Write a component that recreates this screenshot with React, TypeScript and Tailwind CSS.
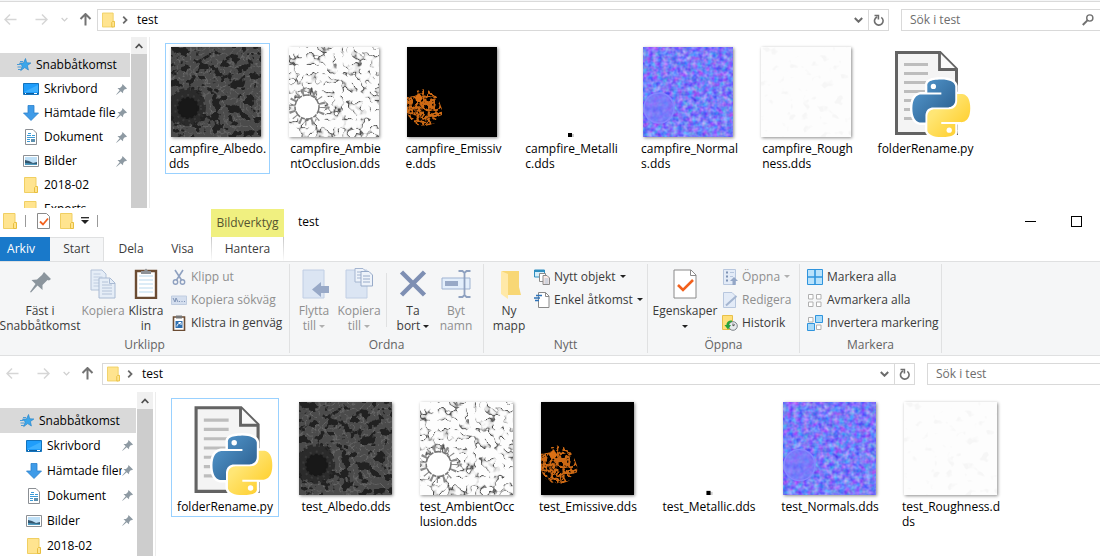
import type { ReactNode } from "react"
import { clsx } from "clsx"

type Kind = "albedo" | "occlusion" | "emissive" | "metallic" | "normals" | "roughness" | "python"

type FileEntry = { kind: Kind; lines: string[]; selected?: boolean }

const topFiles: FileEntry[] = [
  { kind: "albedo", lines: ["campfire_Albedo.", "dds"], selected: true },
  { kind: "occlusion", lines: ["campfire_Ambie", "ntOcclusion.dds"] },
  { kind: "emissive", lines: ["campfire_Emissiv", "e.dds"] },
  { kind: "metallic", lines: ["campfire_Metalli", "c.dds"] },
  { kind: "normals", lines: ["campfire_Normal", "s.dds"] },
  { kind: "roughness", lines: ["campfire_Rough", "ness.dds"] },
  { kind: "python", lines: ["folderRename.py"] },
]

const bottomFiles: FileEntry[] = [
  { kind: "python", lines: ["folderRename.py"], selected: true },
  { kind: "albedo", lines: ["test_Albedo.dds"] },
  { kind: "occlusion", lines: ["test_AmbientOcc", "lusion.dds"] },
  { kind: "emissive", lines: ["test_Emissive.dds"] },
  { kind: "metallic", lines: ["test_Metallic.dds"] },
  { kind: "normals", lines: ["test_Normals.dds"] },
  { kind: "roughness", lines: ["test_Roughness.d", "ds"] },
]

// Noise filters shared by all thumbnails
function TextureFilters() {
  return (
    <svg className="absolute size-0" aria-hidden="true">
      <defs>
        <filter id="dark-blobs" x="0" y="0" width="1" height="1" colorInterpolationFilters="sRGB">
          <feTurbulence type="fractalNoise" baseFrequency="0.12" numOctaves="3" seed="8" />
          <feColorMatrix values="0 0 0 0 0.13  0 0 0 0 0.13  0 0 0 0 0.13  16 0 0 0 -8.6" />
        </filter>
        <filter id="stone-grain" x="0" y="0" width="1" height="1" colorInterpolationFilters="sRGB">
          <feTurbulence type="turbulence" baseFrequency="0.15" numOctaves="2" seed="3" />
          <feColorMatrix values="0 0 0 0 0.42  0 0 0 0 0.42  0 0 0 0 0.42  -5 0 0 0 0.9" />
        </filter>
        <filter id="crease-lines" x="0" y="0" width="1" height="1" colorInterpolationFilters="sRGB">
          <feTurbulence type="fractalNoise" baseFrequency="0.11" numOctaves="2" seed="5" result="noise" />
          <feColorMatrix in="noise" values="0 0 0 0 0.2  0 0 0 0 0.2  0 0 0 0 0.2  1 0 0 0 0" />
          <feComponentTransfer result="lines">
            <feFuncA type="table" tableValues="0 0 0 0 0 0 0 0 0.1 0.2 0.9 0 0 0 0 0 0 0 0 0 0" />
          </feComponentTransfer>
          <feColorMatrix in="noise" values="0 0 0 0 0  0 0 0 0 0  0 0 0 0 0  0 7 0 0 -2.9" result="mask" />
          <feComposite in="lines" in2="mask" operator="in" />
        </filter>
        <filter id="embers" x="0" y="0" width="1" height="1" colorInterpolationFilters="sRGB">
          <feTurbulence type="turbulence" baseFrequency="0.18" numOctaves="3" seed="4" />
          <feColorMatrix values="0 0 0 0 0.8  0 0 0 0 0.41  0 0 0 0 0.08  -6 0 0 0 2.3" result="glow" />
          <feComposite in="glow" in2="SourceGraphic" operator="in" />
        </filter>
        <filter id="bumps" x="0" y="0" width="1" height="1" colorInterpolationFilters="sRGB">
          <feTurbulence type="fractalNoise" baseFrequency="0.2" numOctaves="2" seed="6" />
          <feColorMatrix values="0.75 0 0 0 0.1  0 0.7 0 0 0.14  0 0 0.2 0 0.87  0 0 0 0 1" />
        </filter>
        <filter id="faint-blobs" x="0" y="0" width="1" height="1" colorInterpolationFilters="sRGB">
          <feTurbulence type="fractalNoise" baseFrequency="0.12" numOctaves="2" seed="8" />
          <feColorMatrix values="0 0 0 0 0.965  0 0 0 0 0.965  0 0 0 0 0.965  8 0 0 0 -4.9" />
        </filter>
      </defs>
    </svg>
  )
}

const snakePath =
  "M14.25.18l.9.2.73.26.59.3.45.32.34.34.25.34.16.33.1.3.04.26.02.2-.01.13V8.5l-.05.63-.13.55-.21.46-.26.38-.3.31-.33.25-.35.19-.35.14-.33.1-.3.07-.26.04-.21.02H8.77l-.69.05-.59.14-.5.22-.41.27-.33.32-.27.35-.2.36-.15.37-.1.35-.07.32-.04.27-.02.21v3.06H3.17l-.21-.03-.28-.07-.32-.12-.35-.18-.36-.26-.36-.36-.35-.46-.32-.59-.28-.73-.21-.88-.14-1.05-.05-1.23.06-1.22.16-1.04.24-.87.32-.71.36-.57.4-.44.42-.33.42-.24.4-.16.36-.1.32-.05.24-.01h.16l.06.01h8.16v-.83H6.18l-.01-2.75-.02-.37.05-.34.11-.31.17-.28.25-.26.31-.23.38-.2.44-.18.51-.15.58-.12.64-.1.71-.06.77-.04.84-.02 1.27.05z"

function PythonFile({ className }: { className: string }) {
  return (
    <svg viewBox="0 0 90 90" className={clsx("overflow-visible", className)} aria-hidden="true">
      <defs>
        <linearGradient id="snake-blue" x1="0" y1="0" x2="1" y2="1">
          <stop offset="0.2" stopColor="#4d8fc4" />
          <stop offset="0.9" stopColor="#2b5f8f" />
        </linearGradient>
        <linearGradient id="snake-yellow" x1="1" y1="1" x2="0" y2="0">
          <stop offset="0.3" stopColor="#ffe675" />
          <stop offset="0.8" stopColor="#ffd134" />
        </linearGradient>
      </defs>
      <path d="M17.5 5.5H61L77.5 22V86.5H17.5z" fill="#f4f4f4" stroke="#636363" strokeWidth="3" />
      <path d="M60.5 5.5V22.5H77.5" fill="#f9f9f9" stroke="#636363" strokeWidth="2.8" />
      <path d="M25 17.5H49M25 26.5H49M25 35.5H49M25 44.5H49M25 53.5H49M25 62.5H49M25 71.5H49" stroke="#bdbdbd" strokeWidth="3" />
      <g transform="translate(33.5 32.5) scale(2.4)">
        <g stroke="#fff" strokeWidth="2" strokeLinejoin="round" fill="#fff">
          <path d={snakePath} />
          <path d={snakePath} transform="rotate(180 12 12)" />
        </g>
        <path d={snakePath} fill="url(#snake-blue)" />
        <path d={snakePath} transform="rotate(180 12 12)" fill="url(#snake-yellow)" />
        <circle cx="8.7" cy="2.9" r="1.1" fill="#fff" />
        <circle cx="15.3" cy="21.1" r="1.1" fill="#fff" />
      </g>
    </svg>
  )
}

function Thumb({ kind, className }: { kind: Kind; className: string }) {
  if (kind === "python") return <PythonFile className={className} />
  return (
    <svg
      viewBox="0 0 90 90"
      className={clsx(className, kind !== "metallic" && "shadow-[1px_1px_3px_rgba(0,0,0,0.45)]")}
      aria-hidden="true"
    >
      {kind === "albedo" && (
        <>
          <rect width="90" height="90" fill="#4b4b4b" />
          <rect width="90" height="90" filter="url(#stone-grain)" />
          <rect width="90" height="90" filter="url(#dark-blobs)" />
          <circle cx="16" cy="60" r="17" fill="#2b2b2b" stroke="#2b2b2b" strokeWidth="4" strokeDasharray="5 3 2 2" />
          <circle cx="17" cy="61" r="13" fill="none" stroke="#3a3a3a" strokeWidth="2" strokeDasharray="2 4" />
          <circle cx="17" cy="61" r="10" fill="#181818" stroke="#181818" strokeWidth="2" strokeDasharray="3 2" />
        </>
      )}
      {kind === "occlusion" && (
        <>
          <rect width="90" height="90" fill="#fdfdfd" />
          <rect width="90" height="90" filter="url(#crease-lines)" />
          <circle cx="18" cy="60" r="15" fill="none" stroke="#8a8a8a" strokeWidth="7" strokeDasharray="1 4 2 5" />
          <circle cx="18" cy="60" r="12" fill="#fff" stroke="#777" strokeWidth="1.5" strokeDasharray="7 1 4 1" />
        </>
      )}
      {kind === "emissive" && (
        <>
          <rect width="90" height="90" fill="#000" />
          <path
            d="M0 50L7 49 9 44 16 42 23 44 29 49 32 54 35 62 35 68 30 70 28 76 20 79 10 78 4 74 0 66z"
            fill="#000"
            filter="url(#embers)"
          />
          <path d="M8 50l4-4 4 5-3 4-4-1z" fill="#dc7115" />
        </>
      )}
      {kind === "metallic" && (
        <>
          <rect x="44" y="87" width="5" height="4" fill="#ccc" />
          <rect x="43" y="86" width="4" height="4" fill="#000" />
        </>
      )}
      {kind === "normals" && (
        <>
          <rect width="90" height="90" fill="#8080ff" />
          <rect width="90" height="90" filter="url(#bumps)" />
          <circle cx="16" cy="61" r="15" fill="#7a78fb" fillOpacity="0.65" stroke="#8486ff" strokeWidth="1.5" />
        </>
      )}
      {kind === "roughness" && (
        <>
          <rect width="90" height="90" fill="#fdfdfd" />
          <rect width="90" height="90" filter="url(#faint-blobs)" />
        </>
      )}
    </svg>
  )
}

function FileTile({ file, tile, thumb }: { file: FileEntry; tile: string; thumb: string }) {
  return (
    <button
      type="button"
      className={clsx(
        "flex shrink-0 flex-col items-start self-start border pt-[3px] pb-[2px]",
        tile,
        file.selected ? "border-[#99d1ff]" : "border-transparent",
      )}
    >
      <Thumb kind={file.kind} className={thumb} />
      <span className="mt-1 self-center text-left text-[12px] leading-[15px] whitespace-nowrap">
        {file.lines.map((line) => (
          <span key={line} className="block">
            {line}
          </span>
        ))}
      </span>
    </button>
  )
}

function Folder({ className = "h-4 w-[14px]" }: { className?: string }) {
  return (
    <svg viewBox="0 0 14 16" className={clsx("shrink-0", className)} aria-hidden="true">
      <path d="M.5.5H12V15.5H.5z" fill="#ffe48f" stroke="#f0cf62" />
      <path d="M11.5 9.5h2v6h-3v-5z" fill="#ffe48f" stroke="#e8bf3f" />
    </svg>
  )
}

function Pin() {
  return (
    <svg viewBox="0 0 11 11" className="size-[11px] shrink-0" aria-hidden="true">
      <path d="M6.5 0L11 4.5 9.8 5.2 9 4.9 7.2 6.9 7 9.3 4.7 7.2.6 10.8.2 10.4 3.7 6.2 1.5 4.1 4 3.9 6 2z" fill="#8e9aa3" />
    </svg>
  )
}

function StarIcon() {
  return (
    <svg viewBox="0 0 14 14" className="size-[14px] shrink-0" aria-hidden="true">
      <path d="M8.5.5l1.2 4.3 4.2.2-3.5 2.5 1 4.5-3.7-2.4-4 3 1.5-4.700L2.5 5h4z" fill="#3ba6ea" stroke="#2b87cc" strokeWidth=".7" />
      <path d="M0 6.5h3.5M.5 9h3.5M1 11.5h3M3 3.5h3" stroke="#4a9ad6" />
    </svg>
  )
}

const placeIcons: Record<string, ReactNode> = {
  Skrivbord: (
    <>
      <path d="M.5 2.5h15v11H.5z" fill="#1f9dfb" stroke="#1373bd" />
      <path d="M1 11L15 4V11z" fill="#3db0ff" />
      <path d="M1 12.5h14" stroke="#0e5e9e" />
      <path d="M2 12.5h1M11 12.5h3" stroke="#fff" />
    </>
  ),
  "Hämtade filer": <path d="M5 .5h6V8h4.500L8 15.500.500 8H5z" fill="#3f9be8" stroke="#2b80cc" strokeWidth=".8" />,
  Dokument: (
    <>
      <path d="M2.5.5H10L13.5 4V15.5H2.5z" fill="#fff" stroke="#8b8f94" />
      <path d="M5 4.5h3M4 6.5h4M4 8.5h8M4 10.5h3M4 12.5h3M9 6.5h3" stroke="#3c9ad6" />
      <path d="M8 10h4v3H8z" fill="#5c8fae" />
    </>
  ),
  Bilder: (
    <>
      <path d="M.5 2.5h15v11H.5z" fill="#fff" stroke="#8b8f94" />
      <path d="M2 4h12v8H2z" fill="#bfe0f7" />
      <path d="M2 7l4 1 4 2 4-1v3H2z" fill="#34566e" />
      <path d="M2 10l5 .5 7 .5v1H2z" fill="#4e9bc0" />
    </>
  ),
}

const places = ["Skrivbord", "Hämtade filer", "Dokument", "Bilder", "2018-02", "Exports"]

function Sidebar({ width, row, rootPad, childPad }: { width: string; row: string; rootPad: string; childPad: string }) {
  return (
    <>
      <nav className={clsx("shrink-0 pt-4 text-[12px] leading-4", width)}>
        <a href="#snabbatkomst" className={clsx("flex items-center gap-[5px] bg-[#d9d9d9]", row, rootPad)}>
          <StarIcon />
          Snabbåtkomst
        </a>
        {places.map((place) => (
          <a
            key={place}
            href="#plats"
            className={clsx("flex items-center pr-[3px] whitespace-nowrap", row, childPad)}
          >
            {placeIcons[place] ? (
              <svg viewBox="0 0 16 16" className="size-4 shrink-0" aria-hidden="true">
                {placeIcons[place]}
              </svg>
            ) : (
              <span className="flex w-4 shrink-0 justify-center">
                <Folder />
              </span>
            )}
            <span className="ml-[5px] min-w-0 flex-1 overflow-hidden">{place}</span>
            {placeIcons[place] && <Pin />}
          </a>
        ))}
      </nav>
      <div className="mr-[2px] ml-px w-4 shrink-0 bg-[#cdcdcd]">
        <button type="button" aria-label="Rulla upp" className="flex h-[17px] w-full items-center justify-center bg-[#f0f0f0]">
          <svg viewBox="0 0 8 6" className="h-[6px] w-2" aria-hidden="true">
            <path d="M.7 5L4 1.5 7.3 5" fill="none" stroke="#505050" strokeWidth="1.8" />
          </svg>
        </button>
      </div>
    </>
  )
}

function NavArrow({ label, up, flip, faded = true }: { label: string; up?: boolean; flip?: boolean; faded?: boolean }) {
  return (
    <button type="button" aria-label={label} className={clsx("shrink-0", faded ? "text-[#d6d6d6]" : "text-[#737373]")}>
      <svg viewBox="0 0 13 13" className={clsx("size-[13px]", flip && "rotate-180", up && "rotate-90")} aria-hidden="true">
        <path d="M12.5 6.5H1.5M6 1.5L1 6.5 6 11.5" fill="none" stroke="currentColor" strokeWidth={up ? 2 : 1.5} />
      </svg>
    </button>
  )
}

function Chevron({ className, width = 1.6 }: { className: string; width?: number }) {
  return (
    <svg viewBox="0 0 9 6" className={className} aria-hidden="true">
      <path d="M.8 1L4.5 4.7 8.2 1" fill="none" stroke="currentColor" strokeWidth={width} />
    </svg>
  )
}

function AddressBar({ nav, search, magnifier }: { nav: string; search: string; magnifier?: boolean }) {
  return (
    <div className="flex h-[36px] shrink-0 items-center pb-px text-[12px]">
      <div className={clsx("flex shrink-0 items-center", nav)}>
        <NavArrow label="Bakåt" />
        <span className="w-[18px]" />
        <NavArrow label="Framåt" flip />
        <button type="button" aria-label="Senaste platser" className="ml-[13px] text-[#cfcfcf]">
          <Chevron className="h-[5px] w-[7px]" />
        </button>
        <span className="w-[11px]" />
        <NavArrow label="Upp" up faded={false} />
      </div>
      <div className="flex h-[22px] min-w-0 flex-1 items-center border border-[#d9d9d9]">
        <Folder className="ml-1 h-4 w-[13px]" />
        <Chevron className="ml-[6px] h-[6px] w-[8px] -rotate-90 text-[#6b6b6b]" width={2} />
        <button type="button" className="ml-2 flex-1 text-left">
          test
        </button>
        <button type="button" aria-label="Tidigare sökvägar" className="mr-[5px] text-[#6b6b6b]">
          <Chevron className="h-[6px] w-[9px]" width={2} />
        </button>
        <button type="button" aria-label="Uppdatera" className="flex h-full w-5 items-center justify-center border-l border-[#d9d9d9]">
          <svg viewBox="0 0 11 12" className="h-3 w-[11px]" aria-hidden="true">
            <path d="M4 2.9A4.3 4.3 0 1 0 8.3 3.3M1.5 1.5H5.4V5.5" fill="none" stroke="#6e6e6e" strokeWidth="1.6" />
          </svg>
        </button>
      </div>
      <label className={clsx("ml-3 flex h-[22px] shrink-0 items-center border border-r-0 border-[#d9d9d9] pr-[6px]", search)}>
        <input
          type="search"
          aria-label="Sök i test"
          placeholder="Sök i test"
          className="min-w-0 flex-1 bg-transparent pl-2 outline-none placeholder:text-[#6d6d6d]"
        />
        {magnifier && (
          <svg viewBox="0 0 12 12" className="size-3" aria-hidden="true">
            <circle cx="7.8" cy="4" r="3.1" fill="none" stroke="#707070" strokeWidth="1.4" />
            <path d="M5.4 6.4L.8 11" stroke="#707070" strokeWidth="2" />
          </svg>
        )}
      </label>
    </div>
  )
}

function Caret({ faded }: { faded?: boolean }) {
  return (
    <svg viewBox="0 0 6 3" className="inline-block h-[3px] w-[6px] align-middle" aria-hidden="true">
      <path d="M0 0h6L3 3z" fill={faded ? "#b0b0b0" : "#222"} />
    </svg>
  )
}

function BigButton({ width, icon, lines, disabled, caret }: { width: string; icon: ReactNode; lines: string[]; disabled?: boolean; caret?: boolean }) {
  return (
    <button
      type="button"
      disabled={disabled}
      className={clsx("flex shrink-0 flex-col items-center pt-[2px]", width, disabled ? "text-[#8f8f8f]" : "text-[#3b3b3b]")}
    >
      <svg viewBox="0 0 32 32" className="size-8" aria-hidden="true">
        {icon}
      </svg>
      <span className="mt-1 text-center leading-[15px] whitespace-nowrap">
        {lines.map((line, i) => (
          <span key={i} className="block">
            {line}
            {caret && i === lines.length - 1 && (
              <>
                {line && " "}
                <Caret faded={disabled} />
              </>
            )}
          </span>
        ))}
      </span>
    </button>
  )
}

function SmallButton({ icon, label, disabled, caret }: { icon: ReactNode; label: string; disabled?: boolean; caret?: boolean }) {
  return (
    <button
      type="button"
      disabled={disabled}
      className={clsx("flex h-[23px] items-center gap-1 whitespace-nowrap", disabled ? "text-[#8f8f8f]" : "text-[#3b3b3b]")}
    >
      <svg viewBox="0 0 16 16" className="size-4 shrink-0" aria-hidden="true">
        {icon}
      </svg>
      {label}
      {caret && <Caret faded={disabled} />}
    </button>
  )
}

function Group({ title, width, children }: { title: string; width: string; children: ReactNode }) {
  return (
    <section className={clsx("my-[2px] flex shrink-0 flex-col border-r border-[#e0e1e2]", width)}>
      <div className="flex flex-1 pt-px">{children}</div>
      <h2 className="pt-[2px] text-center leading-4 text-[#636363]">{title}</h2>
    </section>
  )
}

const pinIcon = <path d="M20 5L27 12 25 13.5 23.5 13 18.5 18 18.5 23 13.5 18.5 7 25.5 6 25 11.5 17 7.5 13 13 12.5 18 8z" fill="#8b959d" />

const copyIcon = (
  <>
    <path d="M4 3h11l4 4v16H4z" fill="#e5edf7" stroke="#b3c2d8" />
    <path d="M6.5 7h7M6.5 10h9M6.5 13h6M6.5 16h6M6.5 19h6" stroke="#c0cde0" />
    <path d="M12 11h11l5 5v15H12z" fill="#e5edf7" stroke="#a9bad3" />
    <path d="M22.5 11.5V16.5H28" fill="none" stroke="#a9bad3" />
    <path d="M15 15h6M15 18h10M15 21h10M15 24h10M15 27h10" stroke="#b3c2d8" />
  </>
)

const pasteIcon = (
  <>
    <path d="M6 4h20v27H6z" fill="#fff" stroke="#6b4c33" strokeWidth="2.4" />
    <path d="M9 9h14M9 13h14M9 17h14M9 21h14M9 25h14" stroke="#b9d9ee" />
    <path d="M11 7V4h3l2-2.5L18 4h3v3z" fill="#8d9196" />
  </>
)

const moveIcon = (
  <>
    <path d="M5 3h21v28H5z" fill="#dbe5f3" stroke="#c0cee4" />
    <path d="M23 19h8v7h-8v4L14 22.5 23 15z" fill="#98a9c7" />
  </>
)

const copyToIcon = (
  <>
    <path d="M3 3h21v28H3z" fill="#dbe5f3" stroke="#c0cee4" />
    <path d="M12 1.5h8l3 3V15H12z" fill="#eef3fa" stroke="#a4b5d0" />
    <path d="M14 5h6M14 8h6M14 11h6" stroke="#a4b5d0" />
    <path d="M18 4.5h8l3.5 3.5V19H18z" fill="#eef3fa" stroke="#98abc9" />
    <path d="M20 9h7M20 12h7M20 15h7" stroke="#98abc9" />
  </>
)

const renameIcon = (
  <>
    <path d="M2 11h28v11H2z" fill="#e3eefb" stroke="#9fb3d2" />
    <path d="M5 14h13v5H5z" fill="#98a9c7" />
    <path d="M18.5 4h4l2 2 2-2h4M18.5 30h4l2-2 2 2h4M24.5 6v22" fill="none" stroke="#8fa1c0" strokeWidth="1.8" />
  </>
)

const newFolderIcon = (
  <>
    <path d="M9 4h17v16l2 8H14z" fill="#f8d775" />
    <path d="M8 4l7 3v25L8 27z" fill="#ffe9a8" />
  </>
)

const propertiesIcon = (
  <>
    <path d="M5 3h17l5 5v23H5z" fill="#fff" stroke="#8a8a8a" />
    <path d="M21.5 3V8.5H27" fill="none" stroke="#8a8a8a" />
    <path d="M9 18l5 5L24 13" fill="none" stroke="#f2601c" strokeWidth="2.6" />
  </>
)

const smallSquares = (
  <path d="M1.5 2.5h4.5v4.5h-4.5zM9.5 2.5h4.5v4.5h-4.5zM1.5 10h4.5v4.5h-4.5zM9.5 10h4.5v4.5h-4.5z" fill="#fff" stroke="#b0b0b0" />
)

function Ribbon() {
  return (
    <div className="flex h-[95px] shrink-0 border-y border-[#dfe0e1] bg-[#f5f6f7] text-[12px]">
      <Group title="Urklipp" width="w-[290px]">
        <BigButton width="w-[80px]" icon={pinIcon} lines={["Fäst i", "Snabbåtkomst"]} />
        <BigButton width="w-[46px]" icon={copyIcon} lines={["Kopiera"]} disabled />
        <BigButton width="w-[40px]" icon={pasteIcon} lines={["Klistra", "in"]} />
        <div className="ml-[5px]">
          <SmallButton
            label="Klipp ut"
            disabled
            icon={
              <>
                <path d="M4 1l6.5 10M12 1L5.5 11" stroke="#8fa1c0" strokeWidth="1.6" />
                <circle cx="4.5" cy="13" r="2.2" fill="none" stroke="#8fa1c0" strokeWidth="1.4" />
                <circle cx="11.5" cy="13" r="2.2" fill="none" stroke="#8fa1c0" strokeWidth="1.4" />
              </>
            }
          />
          <SmallButton
            label="Kopiera sökväg"
            disabled
            icon={
              <>
                <path d="M.5 4h15v8.5H.5z" fill="#d4deee" stroke="#c0cde0" />
                <path d="M2 6l2 4 1-4 2 4M8 9.5h1M10.5 9.5h1M13 9.5h1" fill="none" stroke="#7f93b5" />
              </>
            }
          />
          <SmallButton
            label="Klistra in genväg"
            icon={
              <>
                <path d="M2.5 2h11v13.5h-11z" fill="#fff" stroke="#6b4c33" strokeWidth="1.6" />
                <path d="M5 .5h6v3H5z" fill="#777" />
                <path d="M4.5 6h7v7h-7z" fill="#2f6fb0" />
                <path d="M6 11.5c0-2 1-3 3-3M7.5 7.5H10V10" fill="none" stroke="#fff" />
              </>
            }
          />
        </div>
      </Group>
      <Group title="Ordna" width="w-[194px]">
        <BigButton width="w-[48px]" icon={moveIcon} lines={["Flytta", "till"]} disabled caret />
        <BigButton width="w-[42px]" icon={copyToIcon} lines={["Kopiera", "till"]} disabled caret />
        <div className="mx-[6px] my-2 w-px bg-[#e0e1e2]" />
        <BigButton width="w-[40px]" icon={<path d="M4.5 5L27.5 28M27.5 5L4.5 28" stroke="#7e8fb3" strokeWidth="4.5" />} lines={["Ta", "bort"]} caret />
        <BigButton width="w-[46px]" icon={renameIcon} lines={["Byt", "namn"]} disabled />
      </Group>
      <Group title="Nytt" width="w-[164px]">
        <BigButton width="w-[50px]" icon={newFolderIcon} lines={["Ny", "mapp"]} />
        <div>
          <SmallButton
            label="Nytt objekt"
            caret
            icon={
              <>
                <path d="M.5 1h10v7H.5z" fill="#d5eefa" stroke="#2f8fc0" />
                <path d="M1 2h9" stroke="#2f8fc0" strokeWidth="2" />
                <path d="M5.5 4.5h6v8h-6z" fill="#fff" stroke="#8a8a8a" />
                <path d="M9 6.5h4l2.5 2.5v6.5H9z" fill="#fbe9e4" stroke="#8a8a8a" />
                <path d="M10.5 10h4M10.5 12h4M10.5 14h4" stroke="#a9c0d6" />
              </>
            }
          />
          <SmallButton
            label="Enkel åtkomst"
            caret
            icon={
              <>
                <path d="M4.5.5h7l3.5 3.5v11.5H4.5z" fill="#fff" stroke="#8a8a8a" />
                <path d="M11.5.5V4.5H15" fill="none" stroke="#8a8a8a" />
                <path d="M2 3.5h6M0 6h6M1 8.5h4" stroke="#2f73b8" strokeWidth="1.4" />
              </>
            }
          />
        </div>
      </Group>
      <Group title="Öppna" width="w-[152px]">
        <BigButton width="w-[74px]" icon={propertiesIcon} lines={["Egenskaper", ""]} caret />
        <div>
          <SmallButton
            label="Öppna"
            disabled
            caret
            icon={
              <>
                <path d="M1.5.5h12v15h-12z" fill="#e3ebf7" stroke="#b8c7de" />
                <path d="M4 3.5h2M4 7.5h2M4 11.5h2" stroke="#7f93b5" strokeWidth="2" />
                <path d="M8 3.5h4M8 7.5h3" stroke="#b8c7de" />
                <path d="M12 8l4 4h-2.5v4h-3v-4H8z" fill="#93a6c6" />
              </>
            }
          />
          <SmallButton
            label="Redigera"
            disabled
            icon={
              <>
                <path d="M1.5.5H10l3.5 3.5v11.5h-12z" fill="#e3ebf7" stroke="#b8c7de" />
                <path d="M4 13.5L14.5 4" stroke="#a4b5d0" strokeWidth="2" />
              </>
            }
          />
          <SmallButton
            label="Historik"
            icon={
              <>
                <path d="M.5.5h10v14H.5z" fill="#ffe07a" stroke="#e8c04a" />
                <circle cx="11" cy="11" r="4.3" fill="#e6eaed" stroke="#7b8288" />
                <path d="M11 8.5V11l2-1.5" fill="none" stroke="#555" />
                <path d="M10 5.5C6 5.5 4.5 7.5 4.5 10H2.5l3.5 4.5L9 10H7c0-2 1-3 3-3z" fill="#27a33b" />
              </>
            }
          />
        </div>
      </Group>
      <Group title="Markera" width="w-[142px]">
        <div className="pl-[7px]">
          <SmallButton
            label="Markera alla"
            icon={
              <>
                <path d="M.5.5h15v15H.5z" fill="#b9e2fb" stroke="#2f94dd" />
                <path d="M8 0v16M0 8h16" stroke="#2f94dd" strokeWidth="1.6" />
              </>
            }
          />
          <SmallButton label="Avmarkera alla" icon={smallSquares} />
          <SmallButton
            label="Invertera markering"
            icon={
              <>
                {smallSquares}
                <path d="M8.5.5h7v7h-7zM.5 8.5h7v7h-7z" fill="#a9dbfa" stroke="#2f94dd" />
              </>
            }
          />
        </div>
      </Group>
    </div>
  )
}

function TitleBar() {
  return (
    <header className="shrink-0 text-[12px]">
      <div className="flex h-[29px] pt-px">
        <div className="flex w-[211px] shrink-0 items-center pb-[5px] pl-[3px]">
          <Folder />
          <span className="mr-[11px] ml-2 h-3 w-px bg-[#9a9a9a]" />
          <button type="button" aria-label="Egenskaper">
            <svg viewBox="0 0 13 16" className="h-4 w-[13px]" aria-hidden="true">
              <path d="M.5.5H9.5L12.5 3.5V15.5H.5z" fill="#fff" stroke="#8a8a8a" />
              <path d="M3 8.5l3 3 5-6" fill="none" stroke="#f2601c" strokeWidth="1.8" />
            </svg>
          </button>
          <button type="button" aria-label="Ny mapp" className="ml-[10px]">
            <Folder />
          </button>
          <button type="button" aria-label="Anpassa verktygsfältet" className="ml-[7px]">
            <svg viewBox="0 0 8 7" className="h-[7px] w-2" aria-hidden="true">
              <path d="M0 .7h8" stroke="#222" strokeWidth="1.3" />
              <path d="M0 3h8L4 7z" fill="#222" />
            </svg>
          </button>
          <span className="ml-2 h-3 w-px bg-[#9a9a9a]" />
        </div>
        <div className="flex w-[73px] shrink-0 items-center justify-center bg-[#f0f080] text-[#555530]">Bildverktyg</div>
        <h1 className="ml-[14px] flex-1 leading-[25px] text-black">test</h1>
        <button type="button" aria-label="Minimera" className="flex h-6 w-[46px] items-center justify-center">
          <span className="h-px w-[11px] bg-black" />
        </button>
        <button type="button" aria-label="Maximera" className="mr-px flex h-6 w-[46px] items-center justify-center">
          <span className="size-[11px] border border-black" />
        </button>
      </div>
      <div className="flex h-6 text-[#3b3b3b]" role="tablist">
        <button type="button" role="tab" className="w-[50px] bg-[#1979ca] pr-2 text-white">
          Arkiv
        </button>
        <button type="button" role="tab" aria-selected="true" className="-mb-px w-[54px] border-t border-r border-[#dfe0e1] bg-[#f5f6f7] pb-[2px]">
          Start
        </button>
        <button type="button" role="tab" className="w-[54px]">
          Dela
        </button>
        <button type="button" role="tab" className="w-[53px] pr-1">
          Visa
        </button>
        <button
          type="button"
          role="tab"
          className="w-[73px] border-x [border-image:linear-gradient(#c4c4c4,#ffffff)_1]"
        >
          Hantera
        </button>
      </div>
    </header>
  )
}

export default function App() {
  return (
    <div className="flex h-screen flex-col overflow-hidden bg-white font-['Open_Sans','Noto_Sans',sans-serif] text-black">
      <TextureFilters />
      <section className="flex h-[208px] shrink-0 flex-col overflow-hidden">
        <div className="h-[2px] shrink-0 border-b border-[#dadada] bg-[#f5f6f7]" />
        <AddressBar nav="w-[97px] pl-[4px]" search="w-[199px]" magnifier />
        <div className="-mt-px flex min-h-0 flex-1">
          <Sidebar width="w-[130px]" row="h-6" rootPad="pl-[17px]" childPad="pl-[23px]" />
          <div className="flex min-w-0 flex-1 gap-[13px] border-l border-[#ececec] pt-[6px] pl-[15px]">
            {topFiles.map((file) => (
              <FileTile key={file.kind} file={file} tile="w-[105px] px-[5px]" thumb="size-[90px]" />
            ))}
          </div>
        </div>
      </section>
      <section className="flex min-h-0 flex-1 flex-col">
        <TitleBar />
        <Ribbon />
        <AddressBar nav="w-[102px] pl-[6px]" search="w-[173px]" />
        <div className="flex min-h-0 flex-1">
          <Sidebar width="w-[136px]" row="h-[25px]" rootPad="pl-5" childPad="pl-[26px]" />
          <div className="flex min-w-0 flex-1 gap-[13px] border-l border-[#ececec] pt-[6px] pl-[15px]">
            {bottomFiles.map((file) => (
              <FileTile key={file.kind} file={file} tile="w-[108px] px-[6px]" thumb="size-[93px]" />
            ))}
          </div>
        </div>
      </section>
    </div>
  )
}
